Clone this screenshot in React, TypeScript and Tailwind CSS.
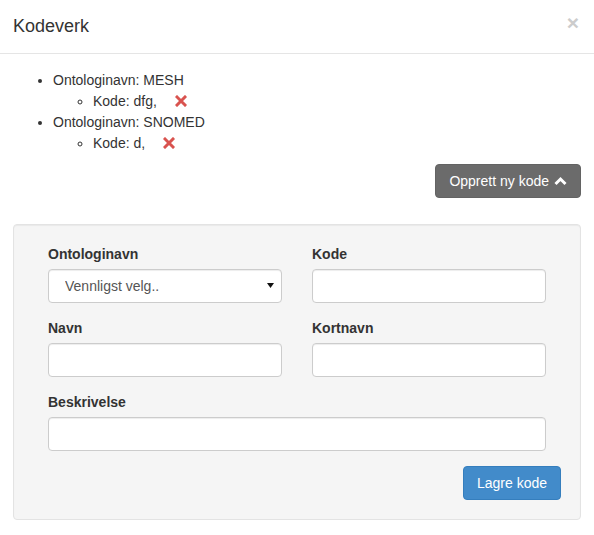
import { useState } from "react";

interface Ontology {
  name: string;
  codes: string[];
}

const ontologies: Ontology[] = [
  { name: "MESH", codes: ["dfg"] },
  { name: "SNOMED", codes: ["d"] }
];

function RemoveIcon() {
  return (
    <svg width="12" height="12" viewBox="0 0 12 12" className="inline-block align-[-1px]">
      <path d="M2 2 L10 10 M10 2 L2 10" stroke="#d9534f" strokeWidth="3" strokeLinecap="square" />
    </svg>
  );
}

function ChevronUp() {
  return (
    <svg width="13" height="10" viewBox="0 0 13 10" className="inline-block">
      <path d="M1.5 8 L6.5 3 L11.5 8" stroke="#fff" strokeWidth="3" fill="none" strokeLinejoin="miter" />
    </svg>
  );
}

const inputClass =
  "block w-full h-[34px] px-3 bg-white border border-[#cccccc] rounded-[4px] shadow-[inset_0_1px_1px_rgba(0,0,0,0.075)] text-[14px] text-[#555555] outline-none";

function Field({ label, children }: { label: string; children: React.ReactNode }) {
  return (
    <div className="mb-[15px]">
      <label className="block mb-[5px] text-[14px] leading-[20px] font-bold text-[#333333]">
        {label}
      </label>
      {children}
    </div>
  );
}

export default function App() {
  const [open] = useState(true);

  return (
    <div className="w-[594px] h-[535px] bg-white text-[#333333] font-['Liberation_Sans',Arial,sans-serif] text-[14px] leading-[20px]">
      {/* header */}
      <div className="flex items-start justify-between pl-[13px] pr-[14px] pt-[13px] pb-[14px] border-b border-[#e5e5e5]">
        <h4 className="text-[18px] leading-[26px] text-[#333333]">Kodeverk</h4>
        <button className="text-[21px] leading-[21px] font-bold text-[#cccccc] mt-[-1px] mr-[1px]">×</button>
      </div>

      {/* body */}
      <div className="px-[13px] pt-[16px]">
        <ul className="list-disc pl-[40px] mb-[10px]">
          {ontologies.map((o) => (
            <li key={o.name}>
              Ontologinavn: {o.name}
              <ul className="list-[circle] pl-[40px]">
                {o.codes.map((c) => (
                  <li key={c} className="leading-[22px]">
                    Kode: {c},<span className="ml-[18px]"><RemoveIcon /></span>
                  </li>
                ))}
              </ul>
            </li>
          ))}
        </ul>

        <div className="flex justify-end">
          <button className="h-[34px] px-[13px] bg-[#6b6b6b] border border-[#636363] rounded-[4px] text-white text-[14px] flex items-center gap-[5px]">
            Opprett ny kode <ChevronUp />
          </button>
        </div>

        {open && (
          <div className="mt-[26px] bg-[#f5f5f5] border border-[#e3e3e3] rounded-[4px] shadow-[inset_0_1px_1px_rgba(0,0,0,0.05)] px-[34px] pt-[19px] pb-[19px]">
            <div className="grid grid-cols-2 gap-x-[30px]">
              <Field label="Ontologinavn">
                <div className="relative">
                  <select className={inputClass + " appearance-none pl-[16px]"} defaultValue="">
                    <option value="">Vennligst velg..</option>
                    <option value="MESH">MESH</option>
                    <option value="SNOMED">SNOMED</option>
                  </select>
                  <svg width="7" height="5" viewBox="0 0 7 5" className="absolute right-[8px] top-[14px]">
                    <path d="M0 0 H7 L3.5 5 Z" fill="#111" />
                  </svg>
                </div>
              </Field>
              <Field label="Kode">
                <input className={inputClass} />
              </Field>
              <Field label="Navn">
                <input className={inputClass} />
              </Field>
              <Field label="Kortnavn">
                <input className={inputClass} />
              </Field>
            </div>
            <Field label="Beskrivelse">
              <input className={inputClass} />
            </Field>
            <div className="flex justify-end mr-[-15px]">
              <button className="h-[34px] px-[13px] bg-[#428bca] border border-[#357ebd] rounded-[4px] text-white text-[14px]">
                Lagre kode
              </button>
            </div>
          </div>
        )}
      </div>
    </div>
  );
}
